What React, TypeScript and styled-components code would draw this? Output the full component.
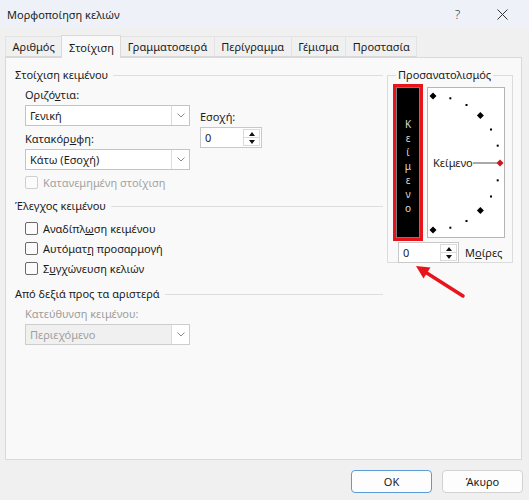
import React from 'react';
import styled, { createGlobalStyle } from 'styled-components';

const GlobalStyle = createGlobalStyle`
    html, body {
        margin: 0;
        padding: 0;
    }
    body {
        background: #f0f0f0;
        font-family: "Noto Sans", "DejaVu Sans", sans-serif;
        font-size: 11px;
        color: #1b1b1b;
    }
`;

const Window = styled.div`
    position: relative;
    width: 529px;
    height: 500px;
    display: flex;
    flex-direction: column;
    background: #f0f0f0;
    overflow: hidden;
`;

const TitleBar = styled.div`
    height: 28px;
    flex: none;
    display: flex;
    align-items: center;
    padding: 0 4px 0 7px;
    background: #eef2f8;
`;

const Title = styled.div`
    flex: 1;
    font-size: 11px;
`;

const TitleButton = styled.div`
    width: 45px;
    height: 28px;
    display: flex;
    align-items: center;
    justify-content: center;
    color: #333;
    font-size: 13px;
    font-weight: 300;
`;

const Body = styled.div`
    flex: 1;
    display: flex;
    flex-direction: column;
    padding: 7px 7px 0 5px;
`;

const TabRow = styled.div`
    height: 22px;
    display: flex;
    align-items: flex-end;
    padding-left: 1px;
`;

const Tab = styled.div<{ $active?: boolean }>`
    position: relative;
    z-index: ${p => (p.$active ? 1 : 0)};
    height: ${p => (p.$active ? 23 : 21)}px;
    margin-bottom: ${p => (p.$active ? -1 : 0)}px;
    margin-left: -1px;
    padding: 0 6.5px;
    box-sizing: border-box;
    display: flex;
    align-items: center;
    justify-content: center;
    background: ${p => (p.$active ? '#f9f9f9' : '#f0f0f0')};
    border: 1px solid ${p => (p.$active ? '#d9d9d9' : '#e3e3e3')};
    border-bottom: ${p => (p.$active ? 'none' : '1px solid #d9d9d9')};
    white-space: nowrap;
`;

const Panel = styled.div`
    height: 403px;
    box-sizing: border-box;
    display: flex;
    gap: 4px;
    padding: 9px 8px 0 9px;
    background: #f9f9f9;
    border: 1px solid #d9d9d9;
`;

const LeftColumn = styled.div`
    width: 368px;
    display: flex;
    flex-direction: column;
`;

const SectionHeader = styled.div<{ $gap?: number }>`
    display: flex;
    align-items: center;
    gap: 5px;
    line-height: 16px;
    margin-top: ${p => p.$gap ?? 0}px;
    white-space: nowrap;

    &::after {
        content: '';
        flex: 1;
        height: 1px;
        background: #dedede;
    }
`;

const Indent = styled.div`
    padding-left: 10px;
    display: flex;
    flex-direction: column;
`;

const AlignGrid = styled.div`
    display: grid;
    grid-template-columns: 165px 62px;
    column-gap: 10px;
    margin-top: 4px;
`;

const FieldColumn = styled.div<{ $offset?: number }>`
    display: flex;
    flex-direction: column;
    padding-top: ${p => p.$offset ?? 0}px;
`;

const FieldLabel = styled.div<{ $gap?: number; $disabled?: boolean }>`
    line-height: 16px;
    margin-top: ${p => p.$gap ?? 0}px;
    margin-bottom: 2px;
    color: ${p => (p.$disabled ? '#9d9d9d' : '#1b1b1b')};
    white-space: nowrap;
`;

const SelectBox = styled.div<{ $disabled?: boolean }>`
    width: 165px;
    height: 21px;
    box-sizing: border-box;
    display: flex;
    align-items: stretch;
    background: ${p => (p.$disabled ? '#f0f0f0' : '#ffffff')};
    border: 1px solid ${p => (p.$disabled ? '#cdcdcd' : '#c4c4c4')};
    color: ${p => (p.$disabled ? '#a0a0a0' : '#1b1b1b')};
`;

const SelectValue = styled.div`
    flex: 1;
    display: flex;
    align-items: center;
    padding-left: 4px;
`;

const SelectArrow = styled.div`
    width: 17px;
    display: flex;
    align-items: center;
    justify-content: center;
    border-left: 1px solid #dcdcdc;
    background: #ffffff;
`;

const SpinBox = styled.div<{ $width: number }>`
    width: ${p => p.$width}px;
    height: 21px;
    box-sizing: border-box;
    display: flex;
    background: #ffffff;
    border: 1px solid #c8c8c8;
`;

const SpinValue = styled.div`
    flex: 1;
    display: flex;
    align-items: center;
    padding-left: 4px;
`;

const SpinButtons = styled.div`
    width: 15px;
    margin: 1px 1px 1px 0;
    display: flex;
    flex-direction: column;
    border: 1px solid #dadada;
`;

const SpinButton = styled.div<{ $down?: boolean }>`
    flex: 1;
    display: flex;
    align-items: center;
    justify-content: center;
    border-top: ${p => (p.$down ? '1px solid #dadada' : 'none')};

    &::before {
        content: '';
        border-left: 3.5px solid transparent;
        border-right: 3.5px solid transparent;
        ${p => (p.$down ? 'border-top: 4px solid #111;' : 'border-bottom: 4px solid #111;')}
    }
`;

const CheckRow = styled.label<{ $gap?: number; $disabled?: boolean }>`
    height: 20px;
    display: flex;
    align-items: center;
    gap: 5px;
    margin-top: ${p => p.$gap ?? 0}px;
    color: ${p => (p.$disabled ? '#a3a3a3' : '#1b1b1b')};
    white-space: nowrap;
`;

const CheckBox = styled.span<{ $disabled?: boolean }>`
    width: 13px;
    height: 13px;
    box-sizing: border-box;
    border-radius: 2px;
    background: #fbfbfb;
    border: 1px solid ${p => (p.$disabled ? '#cfcfcf' : '#6a6a6a')};
`;

const OrientationGroup = styled.fieldset`
    width: 126px;
    height: 196px;
    box-sizing: border-box;
    margin: 0;
    padding: 1px 5px 0 5px;
    min-width: 0;
    border: 1px solid #dcdcdc;
`;

const GroupLegend = styled.legend`
    padding: 0 2px;
    margin-left: 3px;
    line-height: 16px;
    font-size: 11px;
`;

const OrientRow = styled.div`
    display: flex;
    align-items: flex-start;
`;

const VerticalText = styled.div`
    width: 30px;
    height: 157px;
    box-sizing: border-box;
    display: flex;
    flex-direction: column;
    align-items: center;
    justify-content: center;
    padding-top: 7px;
    background: #000;
    border: 3px solid #e8131b;
    box-shadow: inset 0 0 0 1px #7a7a7a;
    color: #dcdcdc;
    font-size: 10px;
    line-height: 14px;
`;

const Dial = styled.div`
    width: 78px;
    height: 151px;
    box-sizing: border-box;
    margin: 3px 0 0 4px;
    background: #ffffff;
    border: 1px solid #b5b5b5;

    svg {
        display: block;
    }
`;

const DegreeRow = styled.div`
    display: flex;
    align-items: center;
    gap: 6px;
    margin-top: 1px;
    padding-left: 5px;
    white-space: nowrap;
`;

const Footer = styled.div`
    display: flex;
    justify-content: flex-end;
    gap: 10px;
    padding: 10px 0 7px 0;
    margin-right: -1px;
`;

const Button = styled.button<{ $primary?: boolean }>`
    width: 81px;
    height: 23px;
    padding: 0;
    border-radius: 4px;
    background: #fdfdfd;
    border: 1px solid ${p => (p.$primary ? '#5b9bd9' : '#d2d2d2')};
    font-family: inherit;
    font-size: 11px;
    color: #1b1b1b;
`;

const Pointer = styled.svg`
    position: absolute;
    left: 408px;
    top: 258px;
`;

const Chevron = () => (
    <svg width="8" height="5" viewBox="0 0 8 5">
        <path d="M0.5 0.5 L4 4 L7.5 0.5" fill="none" stroke="#8a8a8a" strokeWidth="1" />
    </svg>
);

const Select = ({ value, disabled }: { value: string; disabled?: boolean }) => (
    <SelectBox $disabled={disabled}>
        <SelectValue>{value}</SelectValue>
        <SelectArrow>
            <Chevron />
        </SelectArrow>
    </SelectBox>
);

const Spin = ({ value, width }: { value: string; width: number }) => (
    <SpinBox $width={width}>
        <SpinValue>{value}</SpinValue>
        <SpinButtons>
            <SpinButton />
            <SpinButton $down />
        </SpinButtons>
    </SpinBox>
);

// dial marks on a half circle, every 15 degrees
const CX = 5;
const CY = 75;
const R = 67;
const angles = [90, 75, 60, 45, 30, 15, 0, -15, -30, -45, -60, -75, -90];

const OrientationDial = () => (
    <svg width="76" height="149" viewBox="0 0 76 149">
        {angles.map(a => {
            const rad = (a * Math.PI) / 180;
            const x = CX + R * Math.cos(rad);
            const y = CY - R * Math.sin(rad);
            if (a % 45 === 0) {
                const s = 3.5;
                return (
                    <polygon
                        key={a}
                        points={`${x},${y - s} ${x + s},${y} ${x},${y + s} ${x - s},${y}`}
                        fill={a === 0 ? '#d0121b' : '#000'}
                    />
                );
            }
            return <rect key={a} x={x - 1} y={y - 1} width="2" height="2" fill="#000" />;
        })}
        <line x1="45" y1={CY} x2="69" y2={CY} stroke="#555" strokeWidth="1" />
        <text x="5" y="79" fontSize="11" fill="#1b1b1b" fontFamily="Noto Sans, sans-serif">
            Κείμενο
        </text>
    </svg>
);

const tabs = ['Αριθμός', 'Στοίχιση', 'Γραμματοσειρά', 'Περίγραμμα', 'Γέμισμα', 'Προστασία'];

const App: React.FC = () => {
    return (
        <Window>
            <GlobalStyle />
            <TitleBar>
                <Title>Μορφοποίηση κελιών</Title>
                <TitleButton>?</TitleButton>
                <TitleButton>
                    <svg width="11" height="11" viewBox="0 0 11 11">
                        <path d="M0.5 0.5 L10.5 10.5 M10.5 0.5 L0.5 10.5" stroke="#333" strokeWidth="1" />
                    </svg>
                </TitleButton>
            </TitleBar>
            <Body>
                <TabRow>
                    {tabs.map(t => (
                        <Tab key={t} $active={t === 'Στοίχιση'}>
                            {t}
                        </Tab>
                    ))}
                </TabRow>
                <Panel>
                    <LeftColumn>
                        <SectionHeader>Στοίχιση κειμένου</SectionHeader>
                        <Indent>
                            <AlignGrid>
                                <FieldColumn>
                                    <FieldLabel>Οριζό<u>ν</u>τια:</FieldLabel>
                                    <Select value="Γενική" />
                                    <FieldLabel $gap={5}>Κατακόρ<u>υ</u>φη:</FieldLabel>
                                    <Select value="Κάτω (Εσοχή)" />
                                </FieldColumn>
                                <FieldColumn $offset={22}>
                                    <FieldLabel>Εσο<u>χ</u>ή:</FieldLabel>
                                    <Spin value="0" width={62} />
                                </FieldColumn>
                            </AlignGrid>
                            <CheckRow $gap={2} $disabled>
                                <CheckBox $disabled />
                                Κατανεμημένη στοίχιση
                            </CheckRow>
                        </Indent>
                        <SectionHeader $gap={6}>Έλεγχος κειμένου</SectionHeader>
                        <Indent>
                            <CheckRow $gap={4}>
                                <CheckBox />
                                <span>Αναδίπλ<u>ω</u>ση κειμένου</span>
                            </CheckRow>
                            <CheckRow>
                                <CheckBox />
                                <span>Αυτόματ<u>η</u> προσαρμογή</span>
                            </CheckRow>
                            <CheckRow>
                                <CheckBox />
                                <span>Σ<u>υ</u>γχώνευση κελιών</span>
                            </CheckRow>
                        </Indent>
                        <SectionHeader $gap={8}>Από δεξιά προς τα αριστερά</SectionHeader>
                        <Indent>
                            <FieldLabel $gap={4} $disabled>
                                Κατεύθυνση κειμένου:
                            </FieldLabel>
                            <Select value="Περιεχόμενο" disabled />
                        </Indent>
                    </LeftColumn>
                    <OrientationGroup>
                        <GroupLegend>Προσανατολισμός</GroupLegend>
                        <OrientRow>
                            <VerticalText>
                                {'Κείμενο'.split('').map((c, i) => (
                                    <span key={i}>{c}</span>
                                ))}
                            </VerticalText>
                            <Dial>
                                <OrientationDial />
                            </Dial>
                        </OrientRow>
                        <DegreeRow>
                            <Spin value="0" width={61} />
                            <span>
                                Μ<u>ο</u>ίρες
                            </span>
                        </DegreeRow>
                    </OrientationGroup>
                </Panel>
                <Footer>
                    <Button $primary>OK</Button>
                    <Button>Άκυρο</Button>
                </Footer>
            </Body>
            <Pointer width="62" height="44" viewBox="0 0 62 44">
                <line x1="55" y1="38" x2="18" y2="14.5" stroke="#e8131b" strokeWidth="3.5" strokeLinecap="round" />
                <polygon points="8,8 22.5,9.5 15.5,20.5" fill="#e8131b" />
            </Pointer>
        </Window>
    );
};

export default App;
